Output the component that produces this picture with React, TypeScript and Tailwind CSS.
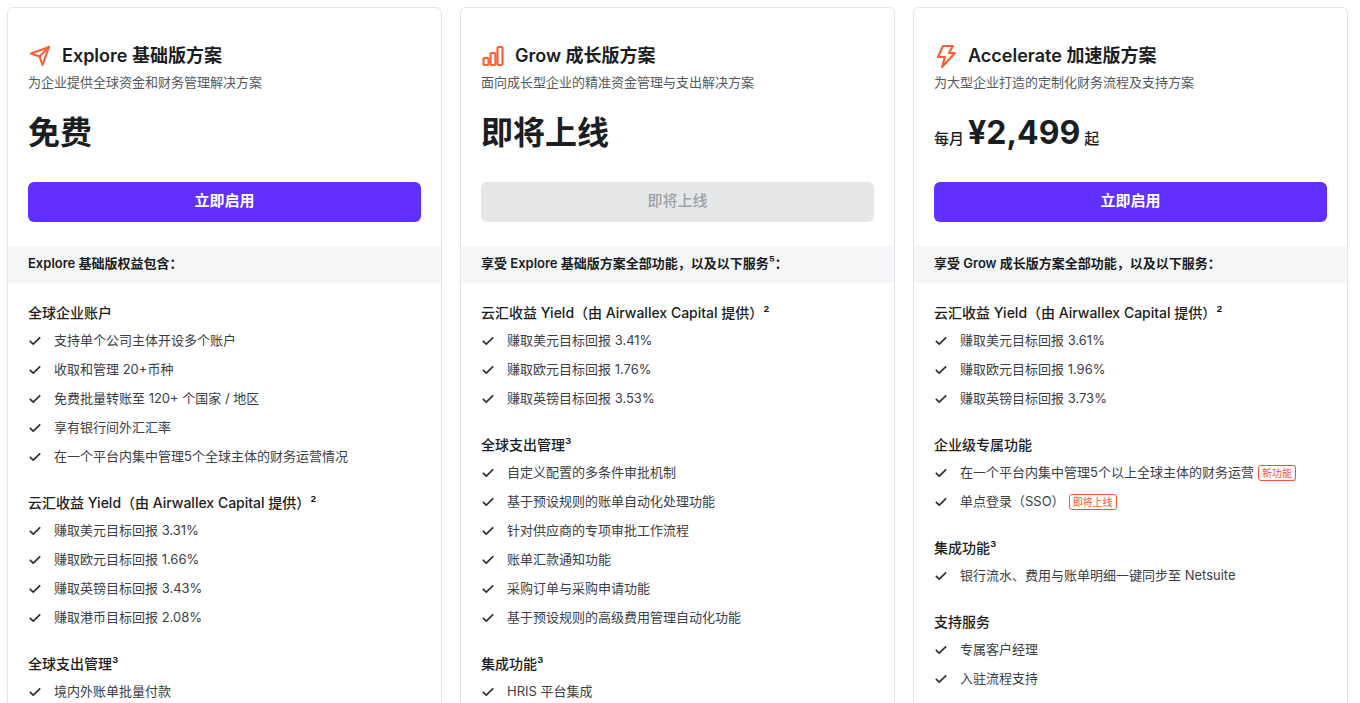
import React from 'react';

type Item = { text: string; tag?: string };
type Section = { title: string; items: Item[] };
type Plan = {
  icon: React.ReactNode;
  name: string;
  desc: string;
  price: React.ReactNode;
  cta: string;
  disabled?: boolean;
  band: string;
  sections: Section[];
};

const SendIcon = () => (
  <svg width="24" height="24" viewBox="0 0 24 24" fill="none" stroke="#f4623a" strokeWidth="2.2" strokeLinejoin="round" strokeLinecap="round">
    <path d="M3 9.5 21 3l-6.5 18-3-8.5z" />
    <path d="M11.5 12.5 21 3" />
  </svg>
);
const ChartIcon = () => (
  <svg width="24" height="24" viewBox="0 0 24 24" fill="none" stroke="#f4623a" strokeWidth="2.2" strokeLinejoin="round">
    <rect x="2.5" y="14" width="5" height="7" rx="1" />
    <rect x="9.5" y="9" width="5" height="12" rx="1" />
    <rect x="16.5" y="3" width="5" height="18" rx="1" />
  </svg>
);
const BoltIcon = () => (
  <svg width="24" height="24" viewBox="0 0 24 24" fill="none" stroke="#f4623a" strokeWidth="2.2" strokeLinejoin="round">
    <path d="M9 2h10l-4 7h6L8 23l3-10H4z" />
  </svg>
);
const Check = () => (
  <svg width="14" height="14" viewBox="0 0 24 24" fill="none" stroke="#333" strokeWidth="3" strokeLinecap="round" strokeLinejoin="round">
    <path d="M4 12.5l5 5L20 6.5" />
  </svg>
);

const plans: Plan[] = [
  {
    icon: <SendIcon />,
    name: 'Explore 基础版方案',
    desc: '为企业提供全球资金和财务管理解决方案',
    price: <span className="text-[32px] font-bold">免费</span>,
    cta: '立即启用',
    band: 'Explore 基础版权益包含：',
    sections: [
      { title: '全球企业账户', items: [
        { text: '支持单个公司主体开设多个账户' },
        { text: '收取和管理 20+币种' },
        { text: '免费批量转账至 120+ 个国家 / 地区' },
        { text: '享有银行间外汇汇率' },
        { text: '在一个平台内集中管理5个全球主体的财务运营情况' },
      ] },
      { title: '云汇收益 Yield（由 Airwallex Capital 提供）²', items: [
        { text: '赚取美元目标回报 3.31%' },
        { text: '赚取欧元目标回报 1.66%' },
        { text: '赚取英镑目标回报 3.43%' },
        { text: '赚取港币目标回报 2.08%' },
      ] },
      { title: '全球支出管理³', items: [{ text: '境内外账单批量付款' }] },
    ],
  },
  {
    icon: <ChartIcon />,
    name: 'Grow 成长版方案',
    desc: '面向成长型企业的精准资金管理与支出解决方案',
    price: <span className="text-[32px] font-bold">即将上线</span>,
    cta: '即将上线',
    disabled: true,
    band: '享受 Explore 基础版方案全部功能，以及以下服务⁵：',
    sections: [
      { title: '云汇收益 Yield（由 Airwallex Capital 提供）²', items: [
        { text: '赚取美元目标回报 3.41%' },
        { text: '赚取欧元目标回报 1.76%' },
        { text: '赚取英镑目标回报 3.53%' },
      ] },
      { title: '全球支出管理³', items: [
        { text: '自定义配置的多条件审批机制' },
        { text: '基于预设规则的账单自动化处理功能' },
        { text: '针对供应商的专项审批工作流程' },
        { text: '账单汇款通知功能' },
        { text: '采购订单与采购申请功能' },
        { text: '基于预设规则的高级费用管理自动化功能' },
      ] },
      { title: '集成功能³', items: [{ text: 'HRIS 平台集成' }] },
    ],
  },
  {
    icon: <BoltIcon />,
    name: 'Accelerate 加速版方案',
    desc: '为大型企业打造的定制化财务流程及支持方案',
    price: (
      <span className="flex items-baseline gap-1">
        <span className="text-[15px] font-medium">每月</span>
        <span className="text-[32px] font-bold">¥2,499</span>
        <span className="text-[15px] font-medium">起</span>
      </span>
    ),
    cta: '立即启用',
    band: '享受 Grow 成长版方案全部功能，以及以下服务：',
    sections: [
      { title: '云汇收益 Yield（由 Airwallex Capital 提供）²', items: [
        { text: '赚取美元目标回报 3.61%' },
        { text: '赚取欧元目标回报 1.96%' },
        { text: '赚取英镑目标回报 3.73%' },
      ] },
      { title: '企业级专属功能', items: [
        { text: '在一个平台内集中管理5个以上全球主体的财务运营', tag: '新功能' },
        { text: '单点登录（SSO）', tag: '即将上线' },
      ] },
      { title: '集成功能³', items: [{ text: '银行流水、费用与账单明细一键同步至 Netsuite' }] },
      { title: '支持服务', items: [{ text: '专属客户经理' }, { text: '入驻流程支持' }] },
    ],
  },
];

export default function App() {
  return (
    <div
      className="h-[703px] overflow-hidden bg-white text-[#1a1d21] grid grid-cols-3 gap-[18px] pl-[7px] pr-[12px] pt-[7px]"
      style={{ fontFamily: 'Inter, "Noto Sans CJK SC", sans-serif' }}
    >
      {plans.map((p) => (
        <div key={p.name} className="border border-[#e3e5e8] rounded-md">
          <div className="px-[20px] pt-[34px] pb-[24px]">
            <div className="flex items-center gap-[10px]">
              {p.icon}
              <span className="text-[18px] font-semibold">{p.name}</span>
            </div>
            <p className="mt-[4px] text-[13px] text-[#555a60]">{p.desc}</p>
            <div className="h-[48px] mt-[16px] flex items-center">{p.price}</div>
            <button
              className={
                p.disabled
                  ? 'mt-[25px] w-full h-[40px] rounded-md bg-[#e6e7e9] text-[#9ea2a8] text-[15px] font-medium'
                  : 'mt-[25px] w-full h-[40px] rounded-md bg-[#612fff] text-white text-[15px] font-semibold'
              }
            >
              {p.cta}
            </button>
          </div>
          <div className="bg-[#f5f6f7] h-[37px] px-[20px] flex items-center text-[13px] font-semibold">{p.band}</div>
          <div className="px-[20px] pt-[15px]">
            {p.sections.map((s) => (
              <div key={s.title} className="mb-[16px]">
                <div className="text-[14px] font-medium h-[29px] flex items-center">{s.title}</div>
                {s.items.map((it) => (
                  <div key={it.text} className="h-[29px] flex items-center gap-[12px] text-[13px] text-[#3c4046]">
                    <Check />
                    <span>{it.text}</span>
                    {it.tag && (
                      <span className="-ml-[8px] text-[10px] text-[#f0553a] border border-[#f0553a] rounded-[3px] px-[3px] leading-[14px]">
                        {it.tag}
                      </span>
                    )}
                  </div>
                ))}
              </div>
            ))}
          </div>
        </div>
      ))}
    </div>
  );
}
